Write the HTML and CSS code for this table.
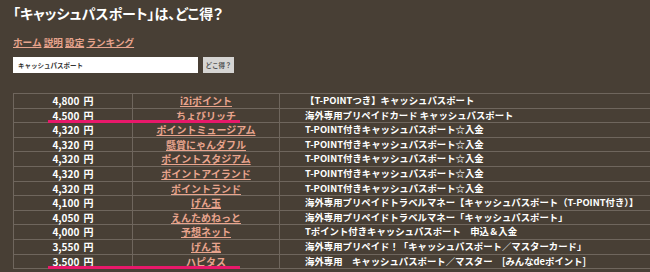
FILE: index.html
```html
<!DOCTYPE html>
<html lang="ja">
<head>
<meta charset="utf-8">
<link rel="stylesheet" href="styles.css">
</head>
<body>
<h1 class="title">「キャッシュパスポート」は、どこ得？</h1>
<nav class="nav"><a href="#">ホーム</a> <a href="#">説明</a> <a href="#">設定</a> <a href="#">ランキング</a></nav>
<form class="search">
  <input class="search-input" type="text" value="キャッシュパスポート">
  <button class="search-btn" type="button">どこ得？</button>
</form>
<div class="table-wrap">
<table class="rank">
  <tr><td class="price">4,800 円</td><td class="site"><a href="#">i2iポイント</a></td><td class="name">【T-POINTつき】キャッシュパスポート</td></tr>
  <tr><td class="price">4,500 円</td><td class="site"><a href="#">ちょびリッチ</a></td><td class="name">海外専用プリペイドカード キャッシュパスポート</td></tr>
  <tr><td class="price">4,320 円</td><td class="site"><a href="#">ポイントミュージアム</a></td><td class="name">T-POINT付きキャッシュパスポート☆入金</td></tr>
  <tr><td class="price">4,320 円</td><td class="site"><a href="#">懸賞にゃんダフル</a></td><td class="name">T-POINT付きキャッシュパスポート☆入金</td></tr>
  <tr><td class="price">4,320 円</td><td class="site"><a href="#">ポイントスタジアム</a></td><td class="name">T-POINT付きキャッシュパスポート☆入金</td></tr>
  <tr><td class="price">4,320 円</td><td class="site"><a href="#">ポイントアイランド</a></td><td class="name">T-POINT付きキャッシュパスポート☆入金</td></tr>
  <tr><td class="price">4,320 円</td><td class="site"><a href="#">ポイントランド</a></td><td class="name">T-POINT付きキャッシュパスポート☆入金</td></tr>
  <tr><td class="price">4,100 円</td><td class="site"><a href="#">げん玉</a></td><td class="name">海外専用プリペイドトラベルマネー【キャッシュパスポート（T-POINT付き）】</td></tr>
  <tr><td class="price">4,050 円</td><td class="site"><a href="#">えんためねっと</a></td><td class="name">海外専用プリペイドトラベルマネー「キャッシュパスポート」</td></tr>
  <tr><td class="price">4,000 円</td><td class="site"><a href="#">予想ネット</a></td><td class="name">Tポイント付きキャッシュパスポート　申込＆入金</td></tr>
  <tr><td class="price">3,550 円</td><td class="site"><a href="#">げん玉</a></td><td class="name">海外専用プリペイド！「キャッシュパスポート／マスターカード」</td></tr>
  <tr><td class="price">3,500 円</td><td class="site"><a href="#">ハピタス</a></td><td class="name">海外専用　キャッシュパスポート／マスター　[みんなdeポイント]</td></tr>
</table>
<span class="mark mark-1"></span>
<span class="mark mark-2"></span>
</div>
</body>
</html>
```
FILE: styles.css
```css
html, body {
  margin: 0;
  padding: 0;
  background: #483f35;
  overflow: hidden;
}
body {
  padding: 0 0 0 13px;
  width: 700px;
  font-family: "Noto Sans CJK JP", "Noto Sans", sans-serif;
  color: #ffffff;
}
.title {
  margin: 0;
  padding-top: 3px;
  font-size: 14px;
  line-height: 20px;
  font-weight: bold;
  font-feature-settings: "palt";
  color: #ffffff;
}
.nav {
  margin-top: 12px;
  font-size: 9.6px;
  line-height: 14px;
  font-weight: bold;
}
.nav a {
  color: #e8a48d;
  text-decoration: underline;
}
.search {
  display: flex;
  gap: 5px;
  margin-top: 8px;
  height: 16px;
}
.search-input {
  box-sizing: border-box;
  width: 185px;
  height: 16px;
  margin: 0;
  padding: 0 5px;
  border: none;
  background: #ffffff;
  font-family: "Noto Sans CJK JP", sans-serif;
  font-size: 6.5px;
  font-weight: bold;
  color: #333333;
}
.search-btn {
  box-sizing: border-box;
  width: 31px;
  height: 16px;
  margin: 0;
  padding: 0;
  border: none;
  background: #d6d5d3;
  font-family: "Noto Sans CJK JP", sans-serif;
  font-size: 6.5px;
  font-weight: bold;
  color: #555555;
}
.table-wrap {
  position: relative;
  margin-top: 20px;
}
.rank {
  border-collapse: collapse;
  width: 720px;
  font-size: 10px;
  font-weight: bold;
  border: 1px solid #766d64;
}
.rank td {
  border: 1px solid #6f665d;
  padding: 0;
  line-height: 13.6px;
  white-space: nowrap;
}
.price {
  width: 118px;
  text-align: center;
  word-spacing: 2px;
}
.site {
  width: 146px;
  text-align: center;
}
.site a {
  color: #e8a48d;
  text-decoration: underline;
}
.rank td.name {
  padding-left: 25px;
  text-align: left;
  font-size: 9.4px;
}
.mark {
  position: absolute;
  left: 35px;
  width: 192px;
  height: 2.5px;
  background: #e8186a;
}
.mark-1 {
  top: 27px;
}
.mark-2 {
  top: 173px;
}
```
